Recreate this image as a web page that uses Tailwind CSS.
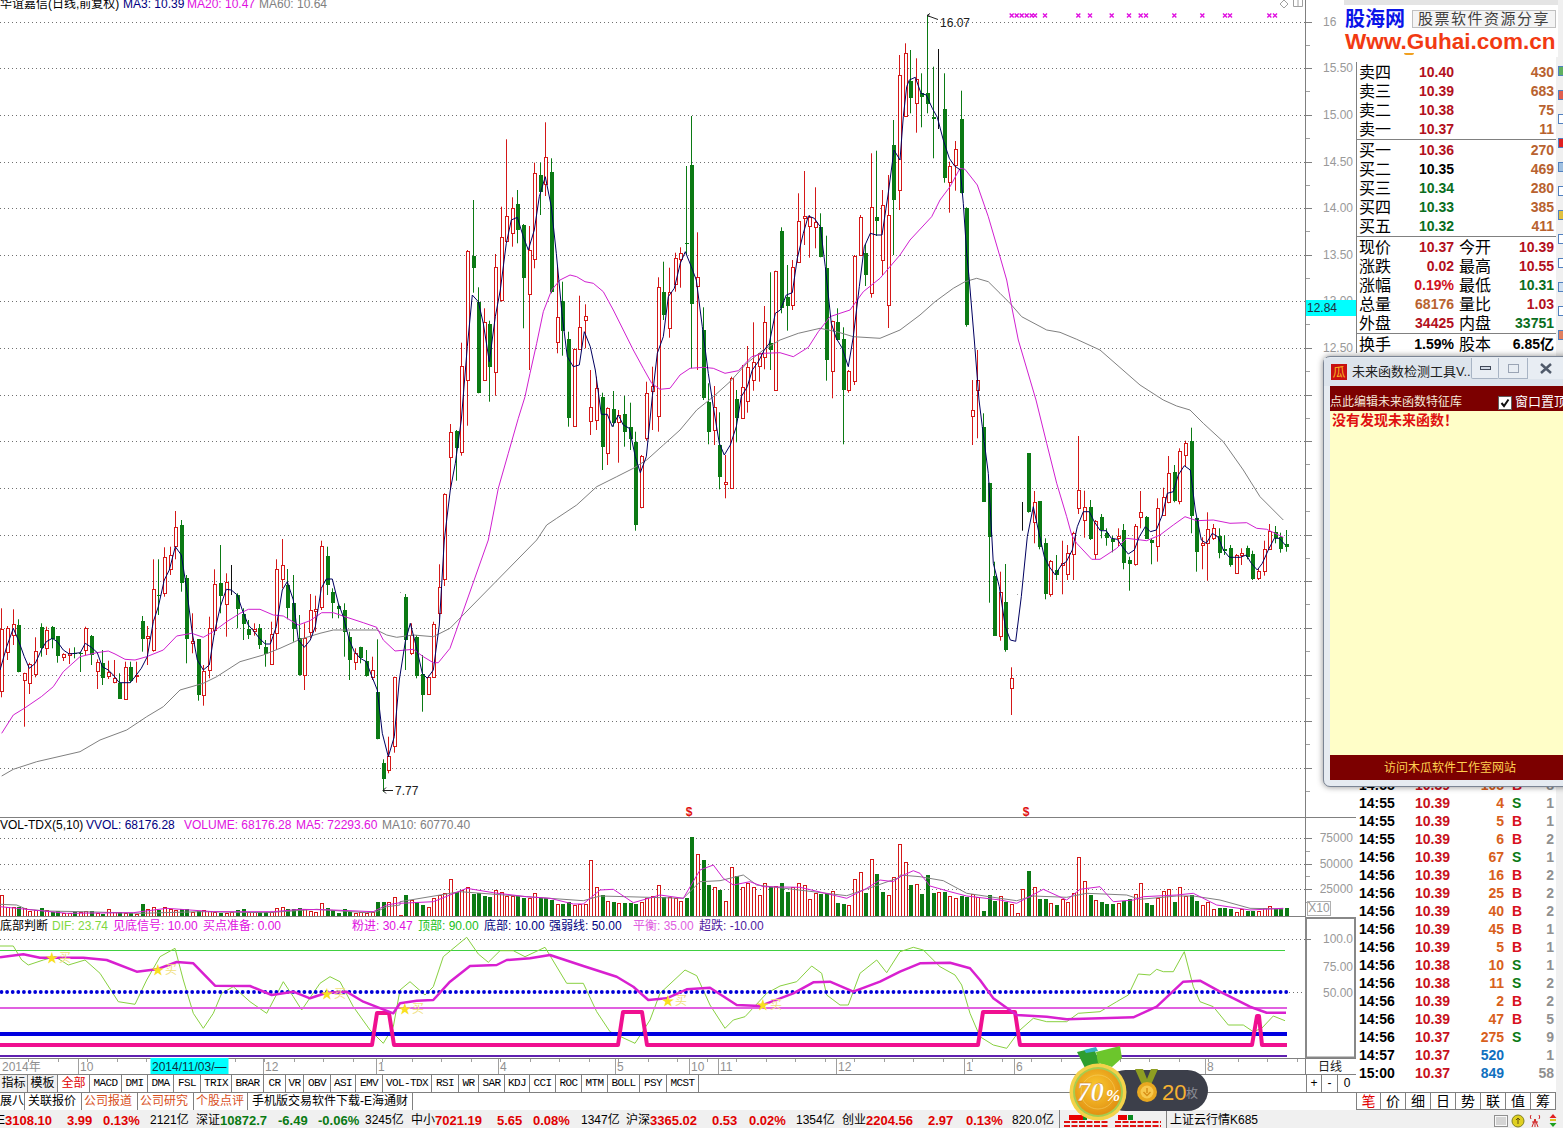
<!DOCTYPE html>
<html lang="zh">
<head>
  <meta charset="UTF-8" />
  <script src="https://cdn.jsdelivr.net/npm/@tailwindcss/browser@4"></script>
  <title>华谊嘉信 日线</title>
</head>
<body class="bg-white">
<div class="relative w-[1563px] h-[1128px] overflow-hidden flex flex-col bg-white text-[12px] text-black font-[family-name:'Liberation_Sans','Noto_Sans_CJK_SC',sans-serif]">

  <div class="flex h-[1110px]">
    <!-- left: chart panes -->
    <div class="w-[1356px] flex flex-col">
      <!-- price pane -->
      <div class="relative h-[817px]">
        <svg id="mainChart" width="1356" height="817" viewBox="0 0 1356 817" class="block"></svg>
        <div class="absolute left-0 -top-[4px] flex whitespace-nowrap leading-[16px]">
          <span class="w-[123px]">华谊嘉信(日线,前复权)</span>
          <span class="w-[64px] text-[#000080]">MA3: 10.39</span>
          <span class="w-[72px] text-[#e010e0]">MA20: 10.47</span>
          <span class="text-[#808080]">MA60: 10.64</span>
        </div>
        <div class="absolute left-[1306px] top-[300px] w-[50px] h-[16px] bg-[#00ffff] pl-[1px] leading-[16px] text-[#203040]">12.84</div>
      </div>

      <!-- volume pane -->
      <div class="relative h-[100px]">
        <svg id="volChart" width="1356" height="100" viewBox="0 817 1356 100" class="block"></svg>
        <div class="absolute left-0 top-[1px] flex whitespace-nowrap leading-[15px]">
          <span class="w-[86px]">VOL-TDX(5,10)</span>
          <span class="w-[98px] text-[#000080]">VVOL: 68176.28</span>
          <span class="w-[112px] text-[#e010e0]">VOLUME: 68176.28</span>
          <span class="w-[86px] text-[#e010e0]">MA5: 72293.60</span>
          <span class="text-[#808080]">MA10: 60770.40</span>
        </div>
        <div class="absolute left-[1307px] top-[84px] w-[24px] h-[15px] border border-[#b0b0b0] text-center leading-[13px] text-[#999999]">X10</div>
      </div>

      <!-- indicator pane -->
      <div class="relative h-[141px]">
        <svg id="indChart" width="1356" height="141" viewBox="0 917 1356 141" class="block"></svg>
        <div class="absolute left-0 top-[1px] flex whitespace-nowrap leading-[16px]">
          <span class="w-[52px]">底部判断</span>
          <span class="w-[61px] text-[#80d840]">DIF: 23.74</span>
          <span class="w-[90px] text-[#e010e0]">见底信号: 10.00</span>
          <span class="w-[149px] text-[#e010e0]">买点准备: 0.00</span>
          <span class="w-[66px] text-[#e010e0]">粉进: 30.47</span>
          <span class="w-[66px] text-[#20c020]">顶部: 90.00</span>
          <span class="w-[65px] text-[#000080]">底部: 10.00</span>
          <span class="w-[84px] text-[#000080]">强弱线: 50.00</span>
          <span class="w-[66px] text-[#e060e0]">平衡: 35.00</span>
          <span class="text-[#5020a0]">超跌: -10.00</span>
        </div>
      </div>

      <!-- date axis -->
      <svg id="dateAxis" width="1356" height="16" viewBox="0 1058 1356 16" class="block"></svg>

      <!-- indicator tabs -->
      <div class="flex h-[17px] border-y border-[#808080] leading-[17px] box-content -mb-[2px] text-center whitespace-nowrap">
        <span class="w-[28px] border-r border-[#808080] bg-[#f0f0f0]">指标</span>
        <span class="w-[30px] border-r border-[#808080] bg-[#f0f0f0]">模板</span>
        <span class="w-[32px] border-r border-[#808080] text-[#e00000]">全部</span>
        <div class="flex tracking-[-0.6px] text-[11px] font-[family-name:'Liberation_Mono',monospace]">
          <span class="w-[32px] border-r border-[#808080]">MACD</span>
          <span class="w-[26px] border-r border-[#808080]">DMI</span>
          <span class="w-[26px] border-r border-[#808080]">DMA</span>
          <span class="w-[27px] border-r border-[#808080]">FSL</span>
          <span class="w-[31px] border-r border-[#808080]">TRIX</span>
          <span class="w-[32px] border-r border-[#808080]">BRAR</span>
          <span class="w-[22px] border-r border-[#808080]">CR</span>
          <span class="w-[18px] border-r border-[#808080]">VR</span>
          <span class="w-[27px] border-r border-[#808080]">OBV</span>
          <span class="w-[25px] border-r border-[#808080]">ASI</span>
          <span class="w-[27px] border-r border-[#808080]">EMV</span>
          <span class="w-[49px] border-r border-[#808080]">VOL-TDX</span>
          <span class="w-[27px] border-r border-[#808080]">RSI</span>
          <span class="w-[20px] border-r border-[#808080]">WR</span>
          <span class="w-[26px] border-r border-[#808080]">SAR</span>
          <span class="w-[25px] border-r border-[#808080]">KDJ</span>
          <span class="w-[26px] border-r border-[#808080]">CCI</span>
          <span class="w-[26px] border-r border-[#808080]">ROC</span>
          <span class="w-[26px] border-r border-[#808080]">MTM</span>
          <span class="w-[32px] border-r border-[#808080]">BOLL</span>
          <span class="w-[27px] border-r border-[#808080]">PSY</span>
          <span class="w-[32px] border-r border-[#808080]">MCST</span>
        </div>
        <span class="flex-1"></span>
        <span class="w-[16px] border-x border-[#808080]">+</span>
        <span class="w-[16px] border-r border-[#808080]">-</span>
        <span class="w-[18px]">0</span>
      </div>

      <!-- news links -->
      <div class="flex h-[19px] pt-[2px] border-b border-[#808080] leading-[17px] whitespace-nowrap box-content -mb-[3px]">
        <span class="w-[25px] border-r border-[#808080] overflow-hidden">展八</span>
        <span class="w-[57px] pl-[3px] border-r border-[#808080]">关联报价</span>
        <span class="w-[56px] pl-[2px] border-r border-[#808080] text-[#d8501c]">公司报道</span>
        <span class="w-[56px] pl-[2px] border-r border-[#808080] text-[#d8501c]">公司研究</span>
        <span class="w-[54px] pl-[2px] border-r border-[#808080] text-[#d8501c]">个股点评</span>
        <span class="w-[165px] pl-[4px] border-r border-[#808080]">手机版交易软件下载-E海通财</span>
      </div>
    </div>

    <!-- right: quote panel -->
    <div class="w-[207px] flex">
      <div class="w-[200px] flex flex-col">
        <div class="h-[62px]"></div>
        <div id="quotes" class="border-l border-[#808080] text-[16px] leading-[21px]"></div>
        <div class="flex-1"></div>
        <div id="ticks" class="h-[306px]"></div>
        <div class="h-[10px]"></div>
        <div class="flex h-[18px] border-l border-t border-b border-[#808080] text-[14px] leading-[16px] text-center">
          <span class="w-[24px] border-r border-[#808080] text-[#e00000]">笔</span>
          <span class="w-[25px] border-r border-[#808080]">价</span>
          <span class="w-[25px] border-r border-[#808080]">细</span>
          <span class="w-[25px] border-r border-[#808080]">日</span>
          <span class="w-[25px] border-r border-[#808080]">势</span>
          <span class="w-[25px] border-r border-[#808080]">联</span>
          <span class="w-[25px] border-r border-[#808080]">值</span>
          <span class="w-[25px] border-r border-[#808080]">筹</span>
        </div>
      </div>
      <!-- side strip, mostly cut off by the window edge -->
      <div class="flex-1 bg-[#f0f0f0] pt-[66px] flex flex-col gap-[14px] pl-[2px]">
        <span class="w-[8px] h-[10px] border border-[#5080c0] bg-[#60b060]"></span>
        <span class="w-[8px] h-[10px] border border-[#5080c0] bg-[#e06050]"></span>
        <span class="w-[8px] h-[10px] border border-[#5080c0] bg-white"></span>
        <span class="w-[8px] h-[10px] border border-[#5080c0] bg-[#e02020]"></span>
        <span class="w-[8px] h-[10px] border border-[#5080c0] bg-[#a0c0e0]"></span>
        <span class="w-[8px] h-[10px] border border-[#5080c0] bg-white"></span>
        <span class="w-[8px] h-[10px] border border-[#5080c0] bg-[#e0c040]"></span>
        <span class="w-[8px] h-[10px] border border-[#5080c0] bg-white"></span>
        <span class="w-[8px] h-[10px] border border-[#5080c0] bg-white"></span>
        <span class="w-[8px] h-[10px] border border-[#5080c0] bg-[#d0e0f0]"></span>
        <span class="w-[8px] h-[10px] border border-[#5080c0] bg-white"></span>
        <span class="w-[8px] h-[10px] border border-[#5080c0] bg-[#e08060]"></span>
      </div>
    </div>
  </div>

  <!-- status bar -->
  <div class="flex h-[18px] bg-[#f0f0f0] leading-[21px] whitespace-nowrap overflow-hidden">
    <span class="w-[5px] overflow-hidden"><span class="-ml-[3px] inline-block">E</span></span>
    <div class="flex text-[13px] font-bold text-[#e00000]">
      <span class="w-[62px]">3108.10</span>
      <span class="w-[36px]">3.99</span>
      <span class="w-[47px]">0.13%</span>
    </div>
    <span class="w-[46px]">2121亿</span>
    <span class="w-[24px]">深证</span>
    <div class="flex text-[13px] font-bold text-[#0a7a14]">
      <span class="w-[58px]">10872.7</span>
      <span class="w-[40px]">-6.49</span>
      <span class="w-[47px]">-0.06%</span>
    </div>
    <span class="w-[46px]">3245亿</span>
    <span class="w-[24px]">中小</span>
    <div class="flex text-[13px] font-bold text-[#e00000]">
      <span class="w-[62px]">7021.19</span>
      <span class="w-[36px]">5.65</span>
      <span class="w-[48px]">0.08%</span>
    </div>
    <span class="w-[45px]">1347亿</span>
    <span class="w-[24px]">沪深</span>
    <div class="flex text-[13px] font-bold text-[#e00000]">
      <span class="w-[62px]">3365.02</span>
      <span class="w-[37px]">0.53</span>
      <span class="w-[47px]">0.02%</span>
    </div>
    <span class="w-[46px]">1354亿</span>
    <span class="w-[24px]">创业</span>
    <div class="flex text-[13px] font-bold text-[#e00000]">
      <span class="w-[62px]">2204.56</span>
      <span class="w-[38px]">2.97</span>
      <span class="w-[46px]">0.13%</span>
    </div>
    <span class="w-[47px]">820.0亿</span>
    <div class="w-[108px] border-x border-[#808080] pl-[3px]">
      <svg width="100" height="18" viewBox="0 0 100 18" class="block">
        <rect x="6" y="5" width="14" height="5" fill="#e80000" />
        <rect x="20" y="5" width="4" height="5" fill="#0a8a20" />
        <rect x="55" y="5" width="9" height="5" fill="#e80000" />
        <rect x="65" y="5" width="5" height="5" fill="#0a8a20" />
        <path d="M1 12h44M1 16h44M52 12h46M52 16h46" stroke="#e01010" stroke-width="2" stroke-dasharray="6 1.5" fill="none" />
      </svg>
    </div>
    <span class="pl-[3px] w-[327px]">上证云行情K685</span>
    <svg width="66" height="18" viewBox="1497 1110 66 18" class="block">
      <rect x="1497.5" y="1115.5" width="13" height="11" fill="#f8f8f8" stroke="#909090" />
      <path d="M1499 1118h10M1499 1120h10M1499 1122h10M1499 1124h10" stroke="#b0b0b0" fill="none" />
      <circle cx="1521" cy="1121" r="6" fill="#e0d020" stroke="#808020" />
      <path d="M1521 1124v-5M1519 1120l2-2 2 2" stroke="#605010" fill="none" />
      <path d="M1538 1127v-8M1538 1119l-3 8M1538 1119l3 8M1534 1115q-1.500 2 0 4M1542 1115q1.500 2 0 4M1535 1122h6" stroke="#d02020" fill="none" />
      <path d="M1556 1114l-3.500 4h7z" fill="#e02020" />
      <rect x="1553" y="1119" width="6" height="2" fill="#e0c020" />
      <path d="M1556 1127l-3.500-4h7z" fill="#20a020" />
    </svg>
  </div>

  <!-- guhai logo over the top of the panel -->
  <div class="absolute left-[1344px] top-0 w-[214px] h-[57px] bg-white">
    <div class="h-[5px] bg-[#e4e4e4]"></div>
    <div class="flex items-center h-[26px] pt-[2px]">
      <span class="w-[68px] text-[20px] leading-[24px] font-bold text-[#0a14e8] pl-[1px]">股海网</span>
      <span class="w-[144px] h-[18px] border border-[#c0c0c0] bg-[#f4f4f4] text-[15px] leading-[16px] tracking-[1.500px] text-center text-[#404040]">股票软件资源分享</span>
    </div>
    <div class="text-[22.5px] leading-[22px] font-bold text-[#f23a12] whitespace-nowrap pl-[1px]">Www.Guhai.com.cn</div>
    <div class="ml-[60px] w-[10px] h-[2px] rounded-b-full bg-[#f0a020]"></div>
  </div>

  <!-- formula checker window -->
  <div class="absolute left-[1323px] top-[356px] w-[250px] h-[431px] rounded-[7px] border border-[#7a8494] bg-[#e6ebf1] shadow-[0_0_6px_rgba(0,0,0,0.45)] pl-[6px] pt-[1px]">
    <div class="flex items-center h-[28px] -ml-[6px] pl-[7px] bg-[#dde4ec]">
      <span class="w-[16px] h-[16px] bg-[#c81010] text-[#f8b020] text-[13px] leading-[16px] text-center">瓜</span>
      <span class="ml-[5px] w-[119px] text-[13px] leading-[16px] text-[#202020] whitespace-nowrap">未来函数检测工具V...</span>
      <span class="flex items-center justify-center w-[28px] h-[21px] -mt-[7px] border-x border-b border-[#a8b4c4] bg-[#e8edf3] rounded-b-[2px]"><span class="block w-[11px] h-[4px] border border-[#404858] bg-[#d0d8e4]"></span></span>
      <span class="flex items-center justify-center w-[29px] h-[21px] -mt-[7px] border-r border-b border-[#a8b4c4] bg-[#e8edf3]"><span class="block w-[11px] h-[9px] border border-[#9aa4b4]"></span></span>
      <span class="flex items-center justify-center w-[36px] h-[21px] -mt-[7px] bg-[#e8edf3]">
        <svg width="12" height="11" viewBox="0 0 12 11"><path d="M1 1l10 9M11 1L1 10" stroke="#505a6a" stroke-width="2.500" fill="none" /></svg>
      </span>
    </div>
    <div class="flex flex-col h-[394px] bg-[#fffec8]">
      <div class="flex items-end h-[25px] bg-[#7c0000] text-[#f4e8d8] leading-[16px] pb-[1px]">
        <span class="w-[168px] whitespace-nowrap">点此编辑未来函数特征库</span>
        <span class="block w-[14px] h-[14px] border border-[#606060] bg-white">
          <svg width="12" height="12" viewBox="0 0 12 12" class="block"><path d="M2.500 6l2.500 3 4.500-6.500" stroke="#101010" stroke-width="2" fill="none" /></svg>
        </span>
        <span class="ml-[3px] text-[13px] whitespace-nowrap text-white">窗口置顶</span>
      </div>
      <div class="flex-1 pl-[2px] text-[14px] leading-[18px] font-bold text-[#e01010] whitespace-nowrap">没有发现未来函数！</div>
      <div class="h-[25px] pl-[54px] pt-[5px] bg-[#7c0000] leading-[16px] text-[#ffd050] whitespace-nowrap">访问木瓜软件工作室网站</div>
    </div>
  </div>

  <!-- reward badge floating over the bottom of the chart -->
  <svg class="absolute left-[1060px] top-[1040px]" width="160" height="88" viewBox="1060 1040 160 88">
    <defs>
      <radialGradient id="goldFace" cx="45%" cy="40%" r="65%">
        <stop offset="0%" stop-color="#fbcb30" />
        <stop offset="100%" stop-color="#e08c10" />
      </radialGradient>
    </defs>
    <rect x="1105" y="1070" width="103" height="41" rx="20.500" fill="#3c3f4a" />
    <path d="M1077 1052l17-4 6 17-14 5z" fill="#2f9e2e" />
    <path d="M1096 1052l24-6 2 12-10 9-14-4z" fill="#6cc62c" />
    <path d="M1084 1050l12-3 2 4-12 2z" fill="#38b0c8" />
    <circle cx="1098" cy="1092" r="28.500" fill="#f4d24a" />
    <circle cx="1098" cy="1092" r="25" fill="#a6cc50" />
    <circle cx="1098" cy="1092" r="23" fill="url(#goldFace)" />
    <circle cx="1098" cy="1092" r="17" fill="none" stroke="#f8d870" stroke-opacity="0.500" />
    <text x="1077" y="1101" font-size="27" font-weight="700" font-style="italic" fill="#fff" stroke="#c07010" stroke-width="0.300" font-family="Liberation Serif">70</text>
    <text x="1106" y="1101" font-size="17" font-weight="700" font-style="italic" fill="#fff" font-family="Liberation Serif">%</text>
    <path d="M1135 1069l8 0 4 10 4-10 7 0-8 18h-7z" fill="#8e9e22" />
    <circle cx="1147" cy="1092" r="10" fill="#e8a820" />
    <circle cx="1147" cy="1092" r="6.500" fill="#f7c94e" />
    <path d="M1147 1088v5M1143.500 1092l3.500 3.500 3.500-3.500" stroke="#d89018" stroke-width="1.500" fill="none" />
    <text x="1162" y="1100" font-size="22" fill="#f6b232" font-family="Liberation Sans">20</text>
    <text x="1186" y="1098" font-size="12" fill="#8a8c94" font-family="Noto Sans CJK SC">枚</text>
  </svg>
</div>

<script>
  const RED = '#d41818', GREEN = '#0b7a14';
  const barX = i => Math.round(1.3 + i * 5.61) + 0.5;
  // points were read off the reference at 3x, so each run keeps its crop origin
  const pts = (ox, oy, s) => s.trim().split(/\s+/).map(p => {
    const [x, y] = p.split(',').map(Number);
    return [ox + x / 3, oy + y / 3];
  });
  const poly = (list, color, w) => `<polyline points="${list.map(p => p[0].toFixed(1) + ',' + p[1].toFixed(1)).join(' ')}" fill="none" stroke="${color}" stroke-width="${w}" stroke-linejoin="round" />`;
  const dotted = (y, x2) => `<line x1="0" x2="${x2}" y1="${y + 0.5}" y2="${y + 0.5}" stroke="#707070" stroke-dasharray="1 3" />`;
  const label = (x, y, t, fill, anchor) => `<text x="${x}" y="${y}" fill="${fill || '#999'}" font-size="12" text-anchor="${anchor || 'start'}" dominant-baseline="central">${t}</text>`;
  const hline = (y, x1, x2, c) => `<line x1="${x1}" x2="${x2}" y1="${y + 0.5}" y2="${y + 0.5}" stroke="${c || '#808080'}" />`;

  // candles: colour, high, body top, body bottom, low
  const candleRuns = [
    [0, 500, `r325,388,575,592 r378,385,458,480 r328,373,405,435 g358,375,515,517 r518,520,542,680 r488,492,550,582 r412,452,520,532 g370,380,444,470 r380,390,445,465 g378,380,415,445
      g408,408,467,488 r460,462,470,483 r445,458,463,492 g442,458,460,475 g455,458,460,516 r380,385,450,465 g405,407,465,495 r478,486,512,567 g450,488,532,555 r482,515,527,537
      r480,535,547,550 g520,548,595,597 r485,502,598,600 g485,502,545,548 r485,525,527,548 g348,362,417,455 r378,408,415,495 r178,268,450,455 g178,285,288,345 r142,170,277,290
      r140,165,208,225 r33,82,140,178 g60,75,250,275 g225,235,417,490 r340,423,430,460 g418,418,585,602 r495,512,585,617 r350,385,510,535 r208,252,390,405 g135,250,290,340
      r220,245,310,410 k195,195,285,285 g280,285,327,385 g325,342,372,420 g360,388,405,417 r370,388,395,407 g372,385,435,447 g420,440,460,500 r365,403,493,495 r178,208,400,450
      r117,196,237,265 g207,255,325,358 g225,310,388,425 g345,415,525,527 r370,415,525,570 r282,330,395,415 r287,327,332,395 r122,138,322,330 g140,168,255,285 g265,277,310,355
      g310,318,327,355 g310,330,395,470 g395,410,480,540 r445,460,488,510 g440,442,475,490 g450,482,528,530 r470,510,530,540 g418,575,715,718 g778,790,838,875 r710,768,810,820
      r530,532,738,758 k277,277,278,278 g282,292,420,510 r370,405,460,465 g405,410,528,535 g465,522,585,635 r530,532,582,583 r365,372,530,532 r193,262,340,368`],
    [430, 110, `r1150,1153,1407,1428 r942,967,1043,1140 g960,962,1013,1112 r698,767,1025,1037 r420,422,808,947 g270,438,473,548 g532,575,848,850 r595,635,808,810 g632,643,773,875 r432,472,787,857
      r290,382,570,575 r88,317,392,395 r262,293,367,410 g240,283,362,400 g342,345,505,655 r348,420,553,780 r158,190,448,475 g158,196,246,315 r37,142,222,258 g145,187,548,550
      r470,620,695,730 g515,572,662,737 g665,688,925,950 r715,718,948,950 r557,652,718,720 r583,617,628,715 r780,890,932,975 r800,835,932,960 g848,860,1010,1080 r892,895,1030,1065
      g843,898,940,950 r900,915,935,1058 g858,912,965,1010 g878,952,988,1020 g965,995,1245,1262 r1035,1038,1192,1195 r815,850,985,992 r770,828,842,960 r502,530,918,965 g455,547,617,630
      r473,547,655,683 r428,443,520,545 r412,428,445,533 g168,398,402,435 g18,165,583,775 r367,500,527,780 g592,660,865,870 g820,875,965,1003 r828,890,960,1005 g907,1005,1100,1138
      r1035,1115,1120,1165 r800,803,1132,1135 g840,868,925,997 r765,832,925,927 r708,770,872,908 r637,755,808,842 r730,730,768,815 r588,637,743,778 g487,700,722,780 r482,482,838,840
      g352,363,595,610 g465,562,590,662 r450,472,585,600 r250,333,455,458 r183,318,325,405 r315,320,348,443 r232,335,350,415 g310,350,440,442 g377,475,752,812 r632,634,785,865
      g595,635,688,690 g652,688,840,1003 r780,782,840,848 r435,437,812,825 r315,322,435,437 g402,430,497,528 r130,290,548,563 g122,320,332,378`],
    [0, 0, `r570,615,780,825 r525,645,915,984 g360,435,600,765 r165,225,570,630`],
    [900, 0, `r130,160,348,350 g150,243,293,340 r175,237,308,398 g220,278,290,382 g45,280,314,340 g200,350,357,475 k147,350,387,387 g220,327,535,548 r485,497,545,638 r423,448,497,572
      g272,357,578,580 g622,625,977,980`],
    [960, 400, `r-60,31,50,135 r-150,-60,-30,115 g40,80,305,305 g248,250,412,608 g485,528,707,707 r515,577,710,722 g492,607,750,755 r802,835,865,945 k583,583,584,584 k306,306,392,392
      g160,160,338,338 r273,305,365,430 g303,304,442,448 g415,430,582,598 r480,483,582,590 g465,510,525,540 r422,488,495,583 r435,458,520,540 r395,400,462,540 r108,270,323,342
      r272,322,360,413 g300,322,418,420 r360,362,460,478 g342,352,390,415 g385,398,412,437 g408,418,428,457 r385,407,413,440 g372,390,490,508 g470,480,492,572 r372,377,492,497
      r273,335,350,385 g348,350,415,415 g415,420,430,493 r295,325,440,485 r263,292,345,347 r168,220,308,310 g195,217,305,307 r145,153,302,313 r122,130,167,200 g83,123,347,400
      g352,355,458,515 r412,428,433,508 r337,388,430,542 r372,385,415,420 g385,407,458,475 g405,447,452,465 g435,445,497,500 r462,464,517,518 r445,458,465,495 g437,445,472,478
      g452,462,538,540 r505,513,533,540 r422,448,513,527 r372,392,447,449 g378,395,413,430 g398,410,447,458 g390,432,440,455`]
  ];

  const hollow = (x, top, bot) => `<rect x="${x - 1}" y="${Math.round(top) + 0.5}" width="3" height="${Math.max(Math.round(bot - top), 1)}" fill="#fff" stroke="${RED}" />`;
  const filled = (x, top, bot) => `<rect x="${x - 1.5}" y="${Math.round(top)}" width="4" height="${Math.max(Math.round(bot - top), 1)}" fill="${GREEN}" />`;

  function drawCandles() {
    let out = '', i = 0;
    for (const [ox, oy, raw] of candleRuns) {
      for (const c of raw.trim().split(/\s+/)) {
        const kind = c[0];
        const [hi, top, bot, lo] = c.slice(1).split(',').map(v => oy + Number(v) / 3);
        const x = barX(i++);
        const color = kind === 'r' ? RED : kind === 'g' ? GREEN : '#101010';
        out += `<line x1="${x}" x2="${x}" y1="${hi.toFixed(1)}" y2="${lo.toFixed(1)}" stroke="${color}" />`;
        if (kind === 'r') out += hollow(x, top, bot);
        if (kind === 'g') out += filled(x, top, bot);
      }
    }
    return out;
  }

  const ma3 = [
    ...pts(0, 500, `0,510 20,440 40,385 55,420 73,470 88,505 106,490 124,450 139,425 157,415 172,425 190,450 208,462 241,458 256,430 274,442 292,458 307,500 325,510 340,525 358,548 391,548 409,525 424,505 442,470 460,365 475,320 493,240 508,210 526,140 544,165 559,260 577,400 592,480 610,510 628,495 643,400 661,320 679,268 694,270 712,285 727,330 745,375 763,395 778,415 796,432 811,432 829,380 847,270 862,245 880,300 895,420 913,442 931,420 946,380 964,265 979,237 997,237 1015,310 1030,350 1048,420 1063,455 1081,475 1099,485 1114,525 1132,570 1147,700 1165,770 1183,710 1198,540 1216,425 1231,370 1249,440 1267,520 1282,535 1300,510 1318,375`),
    ...pts(430, 110, `43,1290 61,1140 76,1060 94,930 112,710 127,555 145,575 160,640 178,755 196,620 211,540 229,400 244,330 262,322 280,380 295,420 313,360 328,260 346,200 364,290 379,430 397,620 412,740 430,770 448,765 463,665 481,710 496,780 514,913 532,913 547,950 565,915 580,945 598,955 616,1040 631,1088 649,1040 667,860 682,730 700,680 715,560 733,535 751,460 766,425 784,470 799,510 817,650 835,790 850,890 868,1000 883,1035 901,1005 919,950 934,860 952,830 967,780 985,755 1003,720 1018,700 1036,610 1051,600 1069,555 1087,548 1102,445 1120,370 1135,318 1153,325 1171,350 1186,470 1204,640 1219,685 1237,715 1255,770 1270,680 1288,530 1303,410 1321,370 1339,375`),
    [882, 235], [888, 195], [894, 150],
    ...pts(900, 0, `0,480 10,350 20,260 28,240 46,232 63,280 79,285 97,325 112,352 130,420 148,475 163,497 181,510 190,610 200,760 207,830 223,1020`),
    ...pts(960, 400, `57,0 67,80 85,220 100,490 118,560 136,680 151,720 167,724 184,590 202,410 220,320 235,390 253,470 268,500 286,525 304,495 319,485 337,450 352,380 370,335 388,335 403,365 421,392 439,392 454,415 472,418 487,440 505,462 523,450 538,410 556,380 571,395 589,390 607,345 622,280 640,275 655,225 673,197 691,210 706,330 724,420 739,430 757,400 775,412 790,450 808,472 841,472 859,465 874,490 892,510 907,490 925,450 943,415 958,415 976,435`)
  ];
  const ma20 = [
    ...pts(0, 500, `5,700 40,645 73,625 124,590 160,560 190,515 240,470 290,458 325,453 345,462 375,478 405,480 440,470 490,450 530,408 575,400 610,412 640,395 680,365 720,340 745,328 780,328 820,345 850,348 895,375 930,362 965,338 1000,338 1035,350 1090,368 1130,382 1150,420 1185,453 1240,448 1270,470 1300,488 1315,488 1350,445`),
    ...pts(430, 110, `175,1290 205,1135 235,1030 265,925 285,860 300,790 320,700 340,605 365,540 390,510 420,495 440,500 465,515 490,520 520,545 550,600 580,660 610,720 640,775 665,820 690,838 720,835 750,795 780,775 820,772 850,775 885,790 925,782 965,740 1000,730 1050,728 1090,740 1135,712 1165,665 1200,620 1230,610 1260,600 1300,545 1350,505`),
    ...pts(900, 0, `0,765 30,720 95,650 120,600 150,560 180,505 195,508 232,555 265,650 300,770 320,840 335,920 355,1020`),
    ...pts(960, 400, `228,0 260,130 290,250 320,350 335,405 350,430 395,478 420,478 470,445 500,415 560,422 600,405 640,375 675,350 710,362 760,360 810,370 860,368 890,385 920,388 970,412`)
  ];
  const ma60 = [
    ...pts(0, 500, `5,828 40,808 110,785 240,755 300,720 380,690 440,650 490,620 540,570 610,550 650,530 720,485 790,465 840,445 900,418 960,400 1000,390 1130,390 1160,405 1190,412 1240,405 1300,410 1350,385`),
    ...pts(430, 110, `320,1290 350,1245 380,1225 440,1185 500,1130 560,1100 610,1075 650,1050 700,1005 750,960 800,900 850,860 900,815 950,760 1000,720 1050,690 1105,670 1170,655 1220,665 1270,680 1350,685`),
    ...pts(900, 0, `0,990 60,945 105,905 160,865 195,845 230,835 265,845 300,880 330,910 365,950 440,990 480,997 530,1018`),
    [1100, 350], [1140, 385],
    ...pts(960, 400, `610,0 650,18 690,30 730,70 790,125 850,210 900,290 970,360`)
  ];

  // main pane
  (function () {
    const gridY = [22, 68, 115, 162, 208, 255, 301, 348, 395, 441, 488, 535, 581, 628, 675, 721, 768];
    let s = gridY.map(y => dotted(y, 1305)).join('');
    s += drawCandles();
    s += poly(ma60, '#808080', 1) + poly(ma20, '#d020d0', 1) + poly(ma3, '#000060', 1);
    s += `<line x1="1305.5" x2="1305.5" y1="0" y2="817" stroke="#808080" />`;
    gridY.forEach(y => {
      s += `<line x1="1306" x2="1312" y1="${y + 0.5}" y2="${y + 0.5}" stroke="#808080" />`;
      s += `<line x1="1306" x2="1310" y1="${y + 23.5}" y2="${y + 23.5}" stroke="#a0a0a0" />`;
    });
    [['16', 22], ['15.50', 68], ['15.00', 115], ['14.50', 162], ['14.00', 208], ['13.50', 255], ['13.00', 301], ['12.50', 348]]
      .forEach(([t, y]) => { s += label(1323, y, t); });
    [335, 350, 365, 380, 395, 405, 435, 535, 570, 635, 687, 722, 738, 823, 907, 975, 990, 1108, 1125].forEach(z => {
      const x = 900 + z / 3;
      s += `<path d="M${x - 2} 13.500l4 4M${x + 2} 13.500l-4 4" stroke="#e010e0" stroke-width="1.400" />`;
    });
    s += `<path d="M927 15.500l11 4M927 15.500l3-2M927 15.500l3 1" stroke="#202020" fill="none" />` + label(940, 22.5, '16.07', '#202020');
    s += `<path d="M383 790.500h10M383 790.500l3-3M383 790.500l3 3" stroke="#202020" fill="none" />` + label(395, 790.5, '7.77', '#202020');
    s += `<path d="M1284 0l4 4-4 4-4-4z" fill="none" stroke="#a0a0a0" /><path d="M1293.500 0v6.500h9v-6.500M1298 0v6.500" fill="none" stroke="#a0a0a0" />`;
    [689, 1026].forEach(x => { s += `<text x="${x}" y="812" fill="#e01010" font-size="12" font-weight="700" text-anchor="middle" dominant-baseline="central">$</text>`; });
    document.getElementById('mainChart').innerHTML = s;
  })();

  // volume pane
  const volRuns = [
    [0, 810, `255 290 290 290g 295 303 300 295g 300 305g 303g 310 308 307g 305 302 303g 310 312g 298 305 307g 308 308g 312 282g 298 292 300g 292 298 300 298g 298g 305 302g 300 303 305 308g 308 306 300g 298g 305 305 305g 307g 305 295 292 298g 298g 295g 298 303 305 280 295g 300g 308g 298g 305g 308 307 308 305 277g 277g 275 262 315 255g 270 275g 285g 290 265 255 250 208 245g 240 232 252g 250g 258g 262g 240 245 258 258 258g`],
    [400, 830, `205g 205 190 203g 205g 210g 222 222g 215g 225 222 222 90 172 195g 213 215g 218 218g 218g 222g 215 205 198 165 200g 202 205 212 205g 22g 72 90g 165g 172 180g 212 112 137g 172 160 172 195 158 170g 168 160g 185g 172 160 165 207 190 192g 190g 182 220g 222g 225 148 127 188g 88 132g 185g 195 142 42`],
    [900, 810, `155 225g 222 252g 195g 248g 247 245g 258 263 258g 260g 252 260 303g 255g 273g 258 275g 282 308 238 183g 232 267g 267g 280 285g 268 275 250 140 214 255g 270 277g 282g 282g 278 273g 267g 253 220 280g 285g 265 243 238 277g 232 258 255g 273g 285 277 298 295g 295g 297g 305 296 302g 302g 302 293 289 298g 295g 295g`]
  ];
  (function () {
    let s = [838, 864, 889].map(y => dotted(y, 1305)).join('');
    let i = 0;
    volRuns.forEach(([ox, oy, raw]) => raw.trim().split(/\s+/).forEach(v => {
      const top = oy + parseFloat(v) / 3, x = barX(i++);
      s += v.endsWith('g') ? filled(x, top, 916) : hollow(x, top, 916);
    }));
    s += poly([...pts(0, 810, `0,283 50,285 80,298 140,303 250,305 420,310 600,305 800,308 950,298 1100,308 1130,305 1160,290 1200,285`),
      ...pts(400, 830, `0,215 180,185 380,200 550,212 600,198 680,200 850,205 900,155 960,152 1030,135 1070,165 1340,197 1420,170 1500,142`),
      ...pts(900, 810, `0,195 60,200 130,212 200,250 300,265 350,272 400,258 500,262 560,250 680,255 720,268 830,258 880,258 960,270 1050,295 1150,297`)], '#808080', 1);
    s += poly([...pts(0, 810, `0,290 50,295 100,300 200,310 400,308 500,295 640,305 820,305 900,298 1000,300 1120,305 1160,285 1200,278`),
      ...pts(400, 830, `0,220 100,215 150,195 200,175 280,188 380,200 450,205 520,222 550,222 600,180 640,178 700,218 780,195 850,205 900,120 940,105 970,145 1000,165 1050,155 1090,170 1200,172 1340,205 1400,175 1440,150 1480,155`),
      ...pts(900, 810, `0,200 40,182 60,190 90,228 150,245 200,258 300,270 350,280 430,238 500,270 540,238 600,230 640,275 700,270 730,260 830,255 880,250 950,285 1050,300 1150,295`)], '#d020d0', 1);
    s += hline(817, 0, 1356) + hline(916, 0, 1306);
    s += `<line x1="1305.5" x2="1305.5" y1="817" y2="917" stroke="#808080" />`;
    [838, 864, 889].forEach(y => { s += `<line x1="1306" x2="1312" y1="${y + 0.5}" y2="${y + 0.5}" stroke="#808080" />`; });
    [851, 876, 902].forEach(y => { s += `<line x1="1306" x2="1310" y1="${y + 0.5}" y2="${y + 0.5}" stroke="#a0a0a0" />`; });
    s += label(1353, 838, '75000', '#999', 'end') + label(1353, 864, '50000', '#999', 'end') + label(1353, 889, '25000', '#999', 'end');
    document.getElementById('volChart').innerHTML = s;
  })();

  // indicator pane
  (function () {
    let s = dotted(939, 1305) + `<line x1="1285" x2="1305" y1="992.5" y2="992.5" stroke="#707070" stroke-dasharray="1 3" />`;
    s += hline(950, 0, 1285, '#40d040');
    s += poly([...pts(0, 810, `0,408 40,408 65,450 85,465 130,450 165,440 205,465 255,450 300,490 355,575 405,583 440,510 480,440 525,415 550,510 580,610 610,655 640,610 665,550 700,530 750,575 800,610 850,515 880,560 905,600 960,520 990,500 1020,515 1060,590 1110,660 1150,700 1180,650`),
      ...pts(400, 830, `0,480 30,455 75,495 100,470 130,380 200,322 235,372 265,397 300,362 340,362 375,380 435,352 500,460 550,460 590,545 630,605 705,640 750,570 780,490 855,420 890,437 930,525 975,595 1000,570 1035,560 1100,490 1140,468 1190,455 1235,408 1265,430 1280,495 1320,525 1345,525 1380,430 1430,390 1460,428`),
      ...pts(900, 810, `0,425 40,412 70,420 120,470 165,495 185,525 210,610 240,680 280,705 320,715 360,660 400,625 440,635 500,635 535,610 600,605 650,575 685,555 715,492 750,495 770,478 790,485 820,485 853,425 880,530 900,575 940,590 985,645 1030,645 1060,665 1085,655 1120,618 1155,632`)], '#88d040', 1);
    for (let i = 0; i < 230; i++) s += `<circle cx="${(1.5 + i * 5.61).toFixed(1)}" cy="992" r="1.9" fill="#0000d8" />`;
    s += `<line x1="0" x2="1287" y1="1008" y2="1008" stroke="#e060e0" stroke-width="2" />`;
    s += `<line x1="0" x2="1287" y1="1034" y2="1034" stroke="#0000e0" stroke-width="4" />`;
    s += `<line x1="0" x2="1287" y1="1056" y2="1056" stroke="#6020b0" stroke-width="2" />`;
    s += `<polyline points="0,1045 372,1045 377,1013 389,1013 394,1045 618,1045 623,1012 642,1012 647,1045 978,1045 983,1012 1015,1012 1020,1045 1252,1045 1257,1016 1259,1016 1262,1045 1287,1045" fill="none" stroke="#f01090" stroke-width="4" stroke-linejoin="round" />`;
    s += poly([...pts(0, 810, `0,442 70,433 120,443 250,443 320,450 410,485 470,478 530,456 580,460 645,527 750,528 815,555 880,545 930,565 980,548 1040,545 1090,575 1180,610`),
      ...pts(400, 830, `0,520 50,512 100,510 150,455 210,408 290,405 320,390 390,385 450,375 550,408 650,440 700,470 745,510 800,505 860,478 930,473 1010,525 1080,528 1180,490 1240,457 1290,455 1360,485 1440,455`),
      ...pts(900, 810, `0,485 60,460 150,458 210,475 240,510 280,565 350,615 440,620 500,628 700,622 770,590 850,515 900,512 960,545 1050,590 1100,608 1158,608`)], '#d820d0', 2.5);
    [[52, 957], [158, 969], [327, 993], [405, 1008], [668, 1000], [763, 1004]].forEach(([x, y]) => {
      s += `<text x="${x}" y="${y}" fill="#f8e020" font-size="13" text-anchor="middle" dominant-baseline="central">★</text>`;
      s += `<text x="${x + 7}" y="${y + 1}" fill="#f0e080" font-size="12" dominant-baseline="central">买</text>`;
    });
    s += `<rect x="1306" y="918" width="49" height="139.500" fill="none" stroke="#888" stroke-width="2" />`;
    s += `<line x1="1305" x2="1311" y1="939.500" y2="939.500" stroke="#808080" />`;
    s += label(1353, 939, '100.0', '#999', 'end') + label(1353, 967, '75.00', '#999', 'end') + label(1353, 993, '50.00', '#999', 'end');
    document.getElementById('indChart').innerHTML = s;

    // date axis
    let d = hline(1058, 0, 1356);
    for (let x = 28; x < 1300; x += 29.5) d += `<line x1="${Math.round(x) + 0.5}" x2="${Math.round(x) + 0.5}" y1="1059" y2="1062" stroke="#a0a0a0" />`;
    [[2, '2014年'], [80, '10'], [265, '12'], [378, '1'], [500, '4'], [617, '5'], [691, '10'], [720, '11'], [838, '12'], [966, '1'], [1016, '6'], [1207, '8']].forEach(([x, t]) => {
      if (x > 2) d += `<line x1="${x - 1.5}" x2="${x - 1.5}" y1="1059" y2="1074" stroke="#a0a0a0" />`;
      d += label(x, 1067, t, '#909090');
    });
    d += `<rect x="150.500" y="1058" width="78" height="16" fill="#00ffff" />` + label(152, 1066.5, '2014/11/03/—', '#103040');
    d += `<line x1="1305.5" x2="1305.5" y1="1058" y2="1074" stroke="#808080" />` + label(1330, 1066.5, '日线', '#202020', 'middle');
    document.getElementById('dateAxis').innerHTML = d;
  })();

  // five-level quote block
  (function () {
    const dr = '#b21020', gr = '#0a6e1e', or = '#b8622f';
    const row = (name, price, color, qty) => `<div class="flex h-[19px] whitespace-nowrap"><span class="w-[34px] pl-[2px]">${name}</span><span class="w-[63px] text-right text-[14px] font-bold" style="color:${color}">${price}</span><span class="flex-1 pr-[2px] text-right text-[14px] font-bold text-[#b8622f]">${qty}</span></div>`;
    const row2 = (n1, v1, c1, n2, v2, c2) => `<div class="flex h-[19px] whitespace-nowrap"><span class="w-[34px] pl-[2px]">${n1}</span><span class="w-[63px] text-right text-[14px] font-bold" style="color:${c1}">${v1}</span><span class="w-[37px] pl-[5px]">${n2}</span><span class="flex-1 pr-[2px] text-right text-[14px] font-bold" style="color:${c2}">${v2}</span></div>`;
    const sep = '<div class="h-[1px] bg-white"></div><div class="h-[1px] bg-[#808080]"></div>';
    let h = '';
    [['卖四', '10.40', dr, 430], ['卖三', '10.39', dr, 683], ['卖二', '10.38', dr, 75], ['卖一', '10.37', dr, 11]].forEach(r => h += row(...r));
    h += sep;
    [['买一', '10.36', dr, 270], ['买二', '10.35', '#000', 469], ['买三', '10.34', gr, 280], ['买四', '10.33', gr, 385], ['买五', '10.32', gr, 411]].forEach(r => h += row(...r));
    h += sep;
    h += row2('现价', '10.37', dr, '今开', '10.39', dr);
    h += row2('涨跌', '0.02', dr, '最高', '10.55', dr);
    h += row2('涨幅', '0.19%', '#d01020', '最低', '10.31', gr);
    h += row2('总量', '68176', or, '量比', '1.03', dr);
    h += row2('外盘', '34425', dr, '内盘', '33751', gr);
    h += sep;
    h += row2('换手', '1.59%', '#000', '股本', '6.85亿', '#000');
    document.getElementById('quotes').innerHTML = h;

    // tick list; the first row sits behind the checker window
    const ticks = [
      ['14:55', '10.39', 105, 'B', 8], ['14:55', '10.39', 4, 'S', 1], ['14:55', '10.39', 5, 'B', 1], ['14:55', '10.39', 6, 'B', 2],
      ['14:56', '10.39', 67, 'S', 1], ['14:56', '10.39', 16, 'B', 2], ['14:56', '10.39', 25, 'B', 2], ['14:56', '10.39', 40, 'B', 2],
      ['14:56', '10.39', 45, 'B', 1], ['14:56', '10.39', 5, 'B', 1], ['14:56', '10.38', 10, 'S', 1], ['14:56', '10.38', 11, 'S', 2],
      ['14:56', '10.39', 2, 'B', 2], ['14:56', '10.39', 47, 'B', 5], ['14:56', '10.37', 275, 'S', 9], ['14:57', '10.37', 520, '', 1], ['15:00', '10.37', 849, '', 58]
    ];
    document.getElementById('ticks').innerHTML = ticks.map(t => `<div class="flex h-[18px] text-[14px] leading-[18px] font-bold">
        <span class="w-[41px] pl-[3px]">${t[0]}</span>
        <span class="w-[53px] text-right text-[#c81020]">${t[1]}</span>
        <span class="w-[54px] text-right" style="color:${t[3] ? '#d8601c' : '#1070c0'}">${t[2]}</span>
        <span class="w-[20px] pl-[8px]" style="color:${t[3] === 'S' ? '#0a7a14' : '#d81020'}">${t[3]}</span>
        <span class="w-[30px] text-right text-[#909090]">${t[4]}</span>
      </div>`).join('');
  })();
</script>
</body>
</html>
